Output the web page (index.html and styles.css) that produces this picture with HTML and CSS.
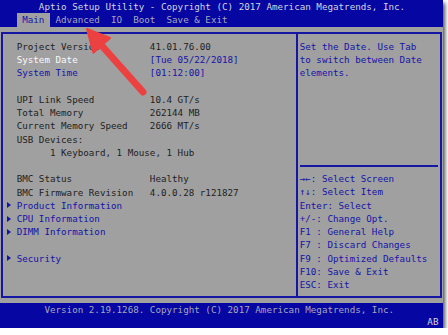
FILE: index.html
```html
<!DOCTYPE html>
<html lang="en">
<head>
  <meta charset="UTF-8">
  <meta name="viewport" content="width=device-width, initial-scale=1.0">
  <title>Aptio Setup Utility</title>
  <link rel="stylesheet" href="styles.css">
</head>
<body>
  <div class="screen">
    <div class="top">
      <div class="title">Aptio Setup Utility - Copyright (C) 2017 American Megatrends, Inc.</div>
      <div class="tabs">
        <span class="tab active">Main</span>
        <span class="tab">Advanced</span>
        <span class="tab">IO</span>
        <span class="tab">Boot</span>
        <span class="tab">Save &amp; Exit</span>
      </div>
    </div>

    <div class="main">
      <div class="frame">
        <div class="left">
          <div class="row"><span class="label">Project Version</span><span>41.01.76.00</span></div>
          <div class="row"><span class="label selected">System Date</span><span class="blue">[Tue 05/22/2018]</span></div>
          <div class="row"><span class="label blue">System Time</span><span class="blue">[01:12:00]</span></div>
          <div class="row"></div>
          <div class="row"><span class="label">UPI Link Speed</span><span>10.4 GT/s</span></div>
          <div class="row"><span class="label">Total Memory</span><span>262144 MB</span></div>
          <div class="row"><span class="label">Current Memory Speed</span><span>2666 MT/s</span></div>
          <div class="row"><span class="label">USB Devices:</span></div>
          <div class="row indent">1 Keyboard, 1 Mouse, 1 Hub</div>
          <div class="row"></div>
          <div class="row"><span class="label">BMC Status</span><span>Healthy</span></div>
          <div class="row"><span class="label">BMC Firmware Revision</span><span>4.0.0.28 r121827</span></div>
          <div class="row sub"><i class="marker"></i>Product Information</div>
          <div class="row sub"><i class="marker"></i>CPU Information</div>
          <div class="row sub"><i class="marker"></i>DIMM Information</div>
          <div class="row"></div>
          <div class="row sub"><i class="marker"></i>Security</div>
        </div>
        <div class="right">
          <div class="help">
            <div class="row">Set the Date. Use Tab</div>
            <div class="row">to switch between Date</div>
            <div class="row">elements.</div>
          </div>
          <div class="sep"></div>
          <div class="keys">
            <div class="row">→←: Select Screen</div>
            <div class="row">↑↓: Select Item</div>
            <div class="row">Enter: Select</div>
            <div class="row">+/-: Change Opt.</div>
            <div class="row">F1 : General Help</div>
            <div class="row">F7 : Discard Changes</div>
            <div class="row">F9 : Optimized Defaults</div>
            <div class="row">F10: Save &amp; Exit</div>
            <div class="row">ESC: Exit</div>
          </div>
        </div>
      </div>
    </div>

    <div class="bottom">
      <div class="version">Version 2.19.1268. Copyright (C) 2017 American Megatrends, Inc.</div>
      <div class="code">AB</div>
    </div>

    <svg class="pointer" width="443" height="328" viewBox="0 0 443 328">
      <line x1="143" y1="92" x2="103" y2="47" stroke="#ec4141" stroke-width="7" stroke-linecap="round"/>
      <polygon points="87,29 110,38 93.4,52.7" fill="#ec4141" stroke="#ec4141" stroke-width="2" stroke-linejoin="round"/>
    </svg>
  </div>
</body>
</html>
```

FILE: styles.css
```css
* { margin: 0; padding: 0; box-sizing: border-box; }
body { background: white; }

.screen {
  position: relative;
  width: 443px;
  height: 328px;
  overflow: hidden;
  font-family: "DejaVu Sans Mono", monospace;
  font-size: 9.22px;
  line-height: 13.25px;
  box-shadow: 2px 3px 4px rgba(0, 0, 0, 0.7);
}

.title, .tab, .row, .version, .code { white-space: pre; }

.top { background: #0606a2; height: 26.5px; }
.title { padding-left: 7ch; color: #d4d4de; }

.tabs { display: flex; padding-left: 3ch; color: #a6a6bc; }
.tab { margin-right: 2ch; }
.tab.active {
  background: #a0a0a0;
  color: #1414a8;
  padding: 0 1ch;
  margin-right: 1ch;
}

.main { background: #a0a0a0; height: 276.5px; padding-top: 5.5px; padding-left: 1px; }

.frame {
  display: flex;
  width: 441px;
  height: 266px;
  border: 2px solid #1616a4;
}

.left {
  width: 295px;
  flex: none;
  border-right: 2px solid #1616a4;
  padding: 5.75px 0 0 13.65px;
  color: #222;
}

.row { display: flex; height: 13.25px; }
.label { width: 24ch; flex: none; }
.selected { color: #fafafa; }
.blue { color: #1414a8; }
.indent { padding-left: 6ch; }
.sub { color: #1414a8; align-items: center; }

.marker {
  width: 0;
  height: 0;
  margin-left: -9.5px;
  margin-right: 5.5px;
  border-left: 4px solid #1414a8;
  border-top: 3.5px solid transparent;
  border-bottom: 3.5px solid transparent;
}

.right { flex: 1; color: #1414a8; padding-left: 1.7px; }
.help { padding-top: 5.75px; height: 125px; }
.sep { height: 2px; background: #1616a4; margin: 5.6px 2px 5.65px 0; }

.bottom { background: #0606a2; height: 25px; padding-top: 0.5px; line-height: 12px; }
.version { padding-left: 8ch; color: #a6a6bc; }
.code { padding-left: 77ch; color: #d4d4de; }

.pointer { position: absolute; left: 0; top: 0; pointer-events: none; }
```
